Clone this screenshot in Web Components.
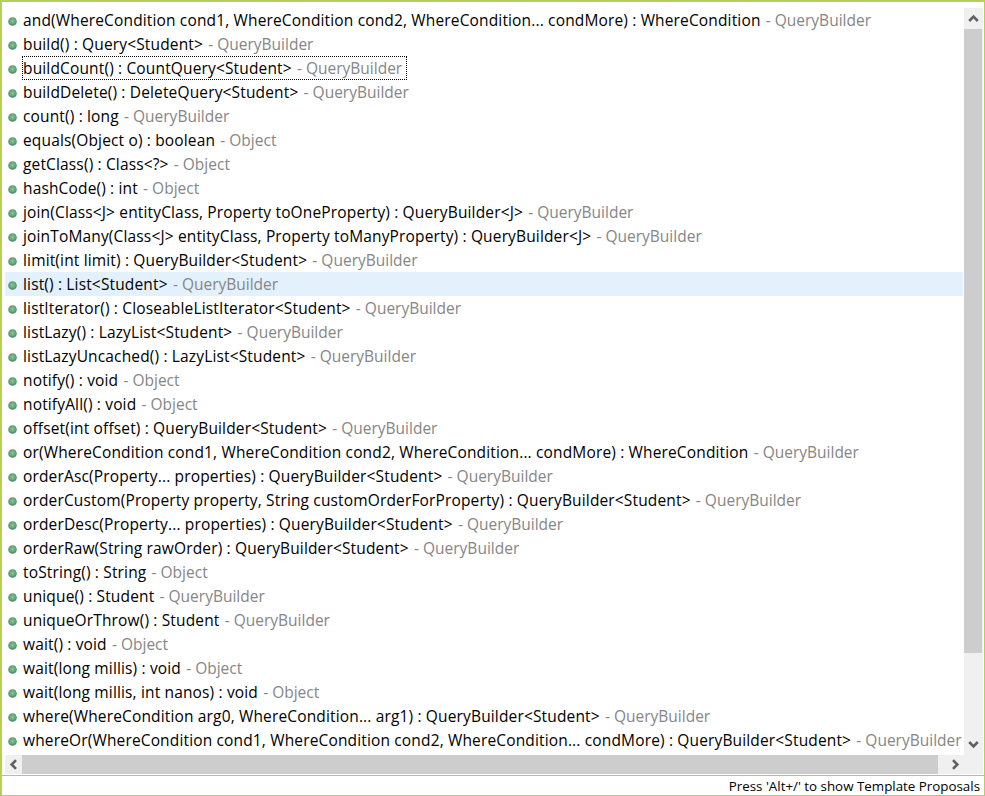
<!DOCTYPE html>
<html>
<head>
<meta charset="utf-8">
<title>Proposals</title>
<style>
    html, body { margin: 0; padding: 0; height: 100%; background: #fff; }
</style>
</head>
<body>
<proposal-popup status="Press 'Alt+/' to show Template Proposals"></proposal-popup>

<script>
const proposals = [
    ['and(WhereCondition cond1, WhereCondition cond2, WhereCondition... condMore) : WhereCondition', 'QueryBuilder'],
    ['build() : Query<Student>', 'QueryBuilder'],
    ['buildCount() : CountQuery<Student>', 'QueryBuilder', 'focus'],
    ['buildDelete() : DeleteQuery<Student>', 'QueryBuilder'],
    ['count() : long', 'QueryBuilder'],
    ['equals(Object o) : boolean', 'Object'],
    ['getClass() : Class<?>', 'Object'],
    ['hashCode() : int', 'Object'],
    ['join(Class<J> entityClass, Property toOneProperty) : QueryBuilder<J>', 'QueryBuilder'],
    ['joinToMany(Class<J> entityClass, Property toManyProperty) : QueryBuilder<J>', 'QueryBuilder'],
    ['limit(int limit) : QueryBuilder<Student>', 'QueryBuilder'],
    ['list() : List<Student>', 'QueryBuilder', 'selected'],
    ['listIterator() : CloseableListIterator<Student>', 'QueryBuilder'],
    ['listLazy() : LazyList<Student>', 'QueryBuilder'],
    ['listLazyUncached() : LazyList<Student>', 'QueryBuilder'],
    ['notify() : void', 'Object'],
    ['notifyAll() : void', 'Object'],
    ['offset(int offset) : QueryBuilder<Student>', 'QueryBuilder'],
    ['or(WhereCondition cond1, WhereCondition cond2, WhereCondition... condMore) : WhereCondition', 'QueryBuilder'],
    ['orderAsc(Property... properties) : QueryBuilder<Student>', 'QueryBuilder'],
    ['orderCustom(Property property, String customOrderForProperty) : QueryBuilder<Student>', 'QueryBuilder'],
    ['orderDesc(Property... properties) : QueryBuilder<Student>', 'QueryBuilder'],
    ['orderRaw(String rawOrder) : QueryBuilder<Student>', 'QueryBuilder'],
    ['toString() : String', 'Object'],
    ['unique() : Student', 'QueryBuilder'],
    ['uniqueOrThrow() : Student', 'QueryBuilder'],
    ['wait() : void', 'Object'],
    ['wait(long millis) : void', 'Object'],
    ['wait(long millis, int nanos) : void', 'Object'],
    ['where(WhereCondition arg0, WhereCondition... arg1) : QueryBuilder<Student>', 'QueryBuilder'],
    ['whereOr(WhereCondition cond1, WhereCondition cond2, WhereCondition... condMore) : QueryBuilder<Student>', 'QueryBuilder']
];

// one line of the list: icon, signature (slot), then the grey owner class
class ProposalRow extends HTMLElement {
    constructor() {
        super();
        this.attachShadow({ mode: 'open' });
    }

    connectedCallback() {
        this.shadowRoot.innerHTML = `
            <style>
                :host { display: flex; align-items: center; height: 24px; white-space: nowrap; overflow: hidden; }
                :host([selected]) { background: #e3f1fc; }
                svg { flex: none; width: 9px; height: 9px; margin: 2px 5px 0 3px; }
                .label { box-sizing: border-box; height: 24px; line-height: 25px; padding: 0 5px 0 1px; }
                /* 1px on, 1px off: the border style "dotted" comes out too faint */
                :host([focus]) .label {
                    background:
                        repeating-linear-gradient(90deg, #000 0 1px, transparent 1px 2px) top / 100% 1px no-repeat,
                        repeating-linear-gradient(90deg, #000 0 1px, transparent 1px 2px) bottom / 100% 1px no-repeat,
                        repeating-linear-gradient(0deg, #000 0 1px, transparent 1px 2px) left / 1px 100% no-repeat,
                        repeating-linear-gradient(0deg, #000 0 1px, transparent 1px 2px) right / 1px 100% no-repeat;
                }
                .owner { color: #868686; margin-left: 1px; letter-spacing: 0; }
            </style>
            <svg viewBox="0 0 9 9">
                <defs>
                    <radialGradient id="dot" cx="50%" cy="45%" r="55%">
                        <stop offset="0%" stop-color="#8fc197"/>
                        <stop offset="60%" stop-color="#69a97b"/>
                        <stop offset="100%" stop-color="#37845a"/>
                    </radialGradient>
                </defs>
                <circle cx="4.5" cy="4.5" r="4.25" fill="url(#dot)"/>
            </svg>
            <span class="label"><slot></slot> <span class="owner">- ${this.getAttribute('owner')}</span></span>
        `;
    }
}
customElements.define('proposal-row', ProposalRow);

// scrollbar: orientation attribute, two arrow buttons and the thumb
class ScrollStrip extends HTMLElement {
    constructor() {
        super();
        this.attachShadow({ mode: 'open' });
    }

    connectedCallback() {
        const vertical = this.getAttribute('orientation') === 'vertical';
        const chevron = vertical
            ? ['M2.2 9 L6.5 4.7 L10.8 9', 'M2.2 4 L6.5 8.3 L10.8 4']
            : ['M9 2.2 L4.7 6.5 L9 10.8', 'M4 2.2 L8.3 6.5 L4 10.8'];
        this.shadowRoot.innerHTML = `
            <style>
                :host { display: flex; flex: none; background: #f0f0f0; }
                :host([orientation=vertical]) { flex-direction: column; width: 19px; }
                :host([orientation=horizontal]) { height: 19px; }
                .btn { flex: none; display: flex; align-items: center; justify-content: center; }
                :host([orientation=vertical]) .btn { height: 21px; }
                :host([orientation=horizontal]) .btn { width: 17px; }
                .track { flex: 1; min-width: 0; min-height: 0; display: flex; }
                :host([orientation=vertical]) .track { flex-direction: column; padding-right: 1px; }
                .thumb { background: #cdcdcd; }
                :host([orientation=vertical]) .thumb { height: var(--thumb); }
                :host([orientation=horizontal]) .thumb { width: var(--thumb); }
                svg { width: 13px; height: 13px; }
                path { fill: none; stroke: #606060; stroke-width: 2.6; }
            </style>
            <div class="btn"><svg viewBox="0 0 13 13"><path d="${chevron[0]}"/></svg></div>
            <div class="track"><div class="thumb"></div></div>
            <div class="btn"><svg viewBox="0 0 13 13"><path d="${chevron[1]}"/></svg></div>
        `;
    }
}
customElements.define('scroll-strip', ScrollStrip);

class StatusLine extends HTMLElement {
    constructor() {
        super();
        this.attachShadow({ mode: 'open' });
    }

    connectedCallback() {
        this.shadowRoot.innerHTML = `
            <style>
                :host { display: flex; justify-content: flex-end; align-items: center; flex: none; height: 19px; border-top: 1px solid #b8b8b8; padding-right: 4px; font-size: 13.35px; letter-spacing: 0; color: #000; background: #fff; }
            </style>
            <slot></slot>
        `;
    }
}
customElements.define('status-line', StatusLine);

class ProposalPopup extends HTMLElement {
    constructor() {
        super();
        this.attachShadow({ mode: 'open' });
    }

    connectedCallback() {
        this.shadowRoot.innerHTML = `
            <style>
                :host { display: flex; flex-direction: column; box-sizing: border-box; width: 985px; height: 796px; border: 2px solid #b5cf5b; border-right-width: 1px; border-bottom-width: 1px; background: #fff; font-family: "Open Sans", "Noto Sans", sans-serif; font-size: 15.5px; letter-spacing: 0.15px; color: #000; overflow: hidden; }
                .main { flex: 1; display: grid; grid-template-columns: 1fr 19px; grid-template-rows: 1fr 19px; padding: 6px 1px 1px 3px; min-height: 0; }
                .list { min-width: 0; min-height: 0; overflow: hidden; padding-right: 1px; }
                .corner { background: #f0f0f0; }
            </style>
            <div class="main">
                <div class="list"></div>
                <scroll-strip orientation="vertical" style="--thumb: 624px"></scroll-strip>
                <scroll-strip orientation="horizontal" style="--thumb: 916px"></scroll-strip>
                <div class="corner"></div>
            </div>
            <status-line>${this.getAttribute('status')}</status-line>
        `;
        const list = this.shadowRoot.querySelector('.list');
        for (const [text, owner, state] of proposals) {
            const row = document.createElement('proposal-row');
            row.setAttribute('owner', owner);
            if (state) row.setAttribute(state, '');
            row.textContent = text;
            list.appendChild(row);
        }
    }
}
customElements.define('proposal-popup', ProposalPopup);
</script>
</body>
</html>
